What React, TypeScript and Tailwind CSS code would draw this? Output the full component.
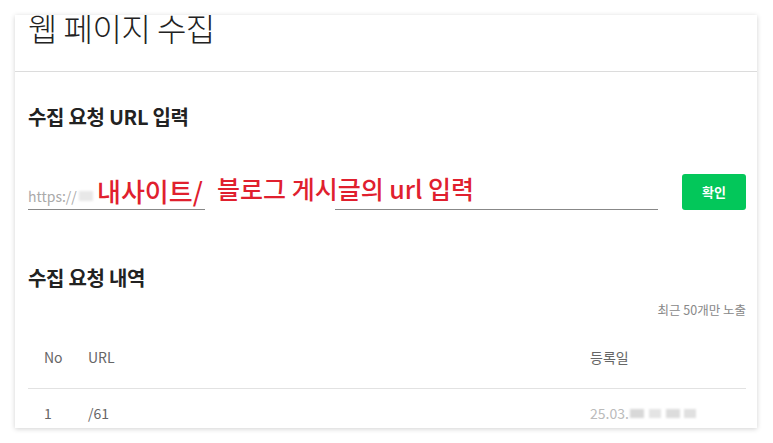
export default function App() {
  return (
    <div
      className="w-[773px] h-[443px] bg-white pt-[15px] px-[15px] overflow-hidden"
      style={{ fontFamily: '"Noto Sans CJK KR", "Noto Sans", sans-serif' }}
    >
      {/* CARD */}
      <div className="w-[742px] h-[413px] bg-white shadow-[0_1px_5px_rgba(0,0,0,0.18)] overflow-hidden">
        {/* HEADER */}
        <div className="flex flex-col h-[57px] border-b border-[#dcdcdc] px-[13px]">
          <h1 className="-mt-[8px] text-[32px] font-light text-[#222] leading-[40px] tracking-[-0.5px]">
            웹 페이지 수집
          </h1>
        </div>

        <div className="pl-[13px] pr-[11px]">
          {/* INPUT SECTION */}
          <h2 className="mt-[30px] text-[20px] font-bold text-[#222] leading-[30px] tracking-[-0.3px]">
            수집 요청 URL 입력
          </h2>

          <div className="relative mt-[42px] flex items-end h-[36px]">
            <div className="w-[177px] h-[27px] border-b border-[#888] flex items-center">
              <span className="text-[14px] text-[#aaa]">https://</span>
              <span className="ml-[2px] w-[14px] h-[10px] bg-[#e8e8e8] blur-[1px]"></span>
            </div>
            <div className="ml-[130px] w-[323px] h-[27px] border-b border-[#888]"></div>
            <button className="ml-auto w-[64px] h-[36px] rounded-[3px] bg-[#03c75a] text-white text-[13px] font-bold">
              확인
            </button>

            {/* annotation overlay */}
            <span className="absolute left-[69px] top-[-1px] text-[26px] font-medium text-[#e0202e] leading-[36px]">
              내사이트/
            </span>
            <span className="absolute left-[189px] top-[-4px] text-[25px] font-medium text-[#e0202e] leading-[36px]">
              블로그 게시글의 url 입력
            </span>
          </div>

          {/* HISTORY SECTION */}
          <h2 className="mt-[53px] text-[20px] font-bold text-[#222] leading-[30px] tracking-[-0.3px]">
            수집 요청 내역
          </h2>
          <p className="mt-[8px] text-right text-[12.5px] text-[#888] leading-[18px]">
            최근 50개만 노출
          </p>

          <div className="mt-[10px] flex pt-[18px] pb-[21px] items-center border-b border-[#e2e2e2] text-[14px] leading-[20px] text-[#666]">
            <span className="w-[60px] pl-[16px]">No</span>
            <span className="flex-1">URL</span>
            <span className="w-[156px]">등록일</span>
          </div>
          <div className="flex pt-[14px] items-center text-[14px] leading-[20px] text-[#666]">
            <span className="w-[60px] pl-[16px]">1</span>
            <span className="flex-1">/61</span>
            <span className="w-[156px] flex items-center text-[#bbb]">
              25.03.
              <span className="ml-[1px] w-[14px] h-[9px] bg-[#d8d8d8] blur-[1px]"></span>
              <span className="ml-[5px] w-[12px] h-[9px] bg-[#e4e4e4] blur-[1px]"></span>
              <span className="ml-[5px] w-[14px] h-[9px] bg-[#dcdcdc] blur-[1px]"></span>
              <span className="ml-[4px] w-[12px] h-[9px] bg-[#e0e0e0] blur-[1px]"></span>
            </span>
          </div>
        </div>
      </div>
    </div>
  );
}
